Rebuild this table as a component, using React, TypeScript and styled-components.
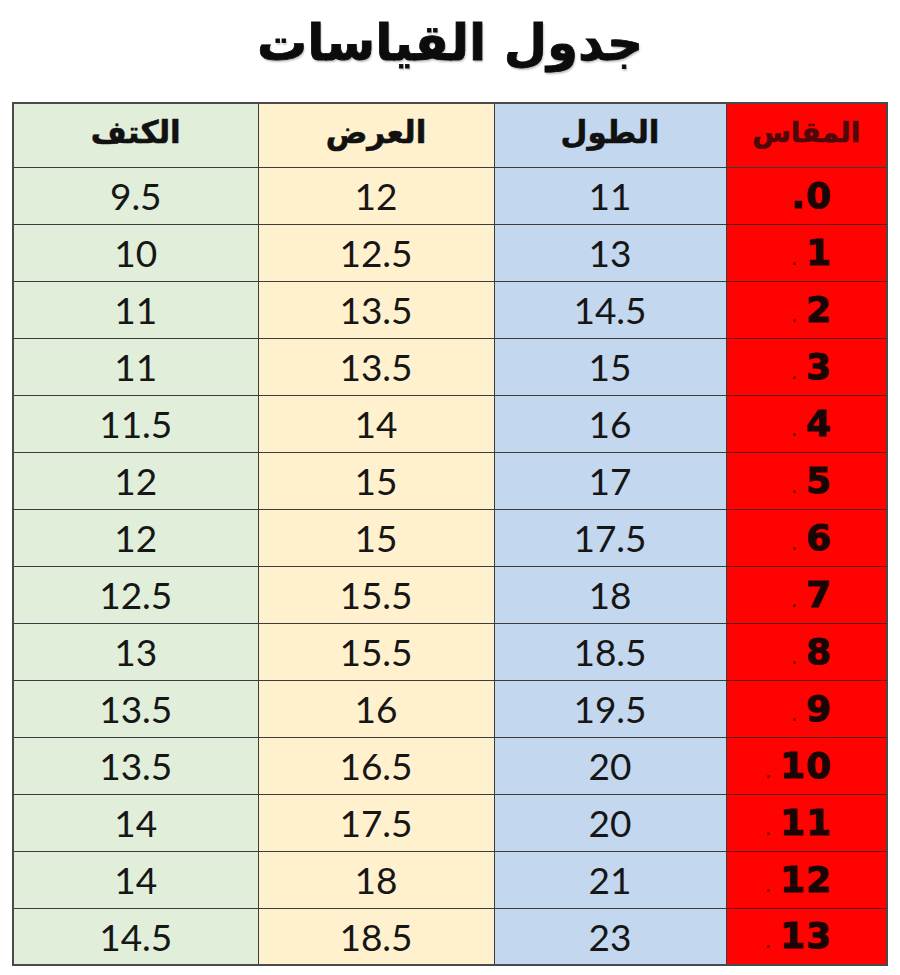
import styled, { createGlobalStyle } from "styled-components";

const GlobalStyle = createGlobalStyle`
  html, body {
    margin: 0;
    padding: 0;
    background: #ffffff;
  }
`;

type Tone = "green" | "yellow" | "blue" | "red";

const tones: Record<Tone, string> = {
  green: "#e1eed9",
  yellow: "#fff1cd",
  blue: "#c3d7ef",
  red: "#ff0303",
};

const rows = [
  { size: "0", shoulder: "9.5", width: "12", length: "11" },
  { size: "1", shoulder: "10", width: "12.5", length: "13" },
  { size: "2", shoulder: "11", width: "13.5", length: "14.5" },
  { size: "3", shoulder: "11", width: "13.5", length: "15" },
  { size: "4", shoulder: "11.5", width: "14", length: "16" },
  { size: "5", shoulder: "12", width: "15", length: "17" },
  { size: "6", shoulder: "12", width: "15", length: "17.5" },
  { size: "7", shoulder: "12.5", width: "15.5", length: "18" },
  { size: "8", shoulder: "13", width: "15.5", length: "18.5" },
  { size: "9", shoulder: "13.5", width: "16", length: "19.5" },
  { size: "10", shoulder: "13.5", width: "16.5", length: "20" },
  { size: "11", shoulder: "14", width: "17.5", length: "20" },
  { size: "12", shoulder: "14", width: "18", length: "21" },
  { size: "13", shoulder: "14.5", width: "18.5", length: "23" },
];

const App = () => {
  return (
    <>
      <GlobalStyle />
      <Page>
        <Title>جدول القياسات</Title>
        <SizeTable>
          <colgroup>
            <col style={{ width: 245 }} />
            <col style={{ width: 236 }} />
            <col style={{ width: 232 }} />
            <col style={{ width: 161 }} />
          </colgroup>
          <thead>
            <HeadRow>
              <HeadCell $tone="green">الكتف</HeadCell>
              <HeadCell $tone="yellow">العرض</HeadCell>
              <HeadCell $tone="blue">الطول</HeadCell>
              <HeadCell $tone="red">المقاس</HeadCell>
            </HeadRow>
          </thead>
          <tbody>
            {rows.map((row) => (
              <BodyRow key={row.size}>
                <Cell $tone="green">{row.shoulder}</Cell>
                <Cell $tone="yellow">{row.width}</Cell>
                <Cell $tone="blue">{row.length}</Cell>
                <SizeCell>
                  <Dot $big={row.size === "0"}>.</Dot>
                  {row.size}
                </SizeCell>
              </BodyRow>
            ))}
          </tbody>
        </SizeTable>
      </Page>
    </>
  );
};

const Page = styled.div`
  width: 900px;
  height: 975px;
  padding: 0 13px;
  box-sizing: border-box;
  display: flex;
  flex-direction: column;
  align-items: center;
`;

const Title = styled.h1`
  margin: 0;
  height: 102px;
  display: flex;
  align-items: center;
  padding-bottom: 16px;
  box-sizing: border-box;
  font-family: "DejaVu Sans", sans-serif;
  font-weight: 700;
  font-size: 50px;
  color: #0c0c0c;
  direction: rtl;
  -webkit-text-stroke: 0.8px #0c0c0c;
  text-shadow: 1px 2px 2px rgba(0, 0, 0, 0.25);
`;

const SizeTable = styled.table`
  width: 874px;
  table-layout: fixed;
  border-collapse: collapse;
  border: 2px solid #4a4a4a;
`;

const HeadRow = styled.tr`
  height: 64px;
`;

const BodyRow = styled.tr`
  height: 57px;
`;

const HeadCell = styled.th<{ $tone: Tone }>`
  padding: 0 0 6px;
  background: ${({ $tone }) => tones[$tone]};
  border: 1.5px solid #3c3c3c;
  font-family: "DejaVu Sans", sans-serif;
  font-weight: 700;
  font-size: ${({ $tone }) => ($tone === "red" ? "28px" : "31px")};
  color: ${({ $tone }) => ($tone === "red" ? "#4e0808" : "#111111")};
  -webkit-text-stroke: 0.6px currentColor;
  text-align: center;
  direction: rtl;
`;

const Cell = styled.td<{ $tone: Tone }>`
  padding: 0;
  background: ${({ $tone }) => tones[$tone]};
  border: 1.5px solid #3c3c3c;
  font-family: Lato, "Open Sans", sans-serif;
  font-size: 37px;
  color: #161616;
  text-align: center;
  line-height: 1;
`;

const SizeCell = styled.td`
  padding: 0 54px 0 0;
  background: ${tones.red};
  border: 1.5px solid #5c1010;
  font-family: "DejaVu Sans", sans-serif;
  font-weight: 700;
  font-size: 36px;
  letter-spacing: 1px;
  color: #1a0505;
  -webkit-text-stroke: 1px #1a0505;
  text-align: right;
  line-height: 1;
`;

const Dot = styled.span<{ $big: boolean }>`
  font-size: ${({ $big }) => ($big ? "36px" : "14px")};
  color: ${({ $big }) => ($big ? "#1a0505" : "#7a0a0a")};
  -webkit-text-stroke: ${({ $big }) => ($big ? "1px" : "0")};
  margin-right: ${({ $big }) => ($big ? "0" : "8px")};
`;

export default App;
